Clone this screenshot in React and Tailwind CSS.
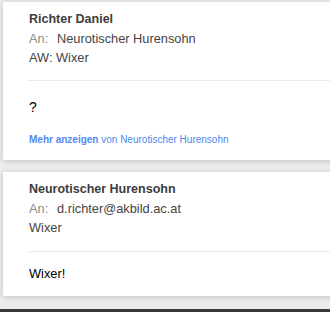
import React from "react";

const font = { fontFamily: '"Liberation Sans", Arial, sans-serif' };

const Header = ({ from, to, subject }) => (
  <div className="pl-[26px] pt-[8px]">
    <div className="h-[19px] leading-[19px] text-[12.5px] font-bold text-[#3c3c3c]">{from}</div>
    <div className="h-[19px] leading-[19px] text-[12.8px] flex">
      <span className="text-[#8a8a8a] w-[28px]">An:</span>
      <span className="text-[#444]">{to}</span>
    </div>
    <div className="h-[19px] leading-[19px] text-[12.8px] text-[#444]">{subject}</div>
  </div>
);

const App = () => {
  return (
    <div style={font} className="h-[312px] w-[330px] overflow-hidden bg-[#ececec] flex flex-col">
      <div className="pl-[3px] pt-[2px] flex flex-col gap-[12px]">
        <div className="w-[340px] h-[158px] bg-white shadow-[0_1px_6px_rgba(0,0,0,0.18)]">
          <Header from="Richter Daniel" to="Neurotischer Hurensohn" subject="AW: Wixer" />
          <div className="ml-[25px] mt-[13px] h-px bg-[#ebebeb]" />
          <div className="pl-[26px] mt-[17px] h-[19px] leading-[19px] text-[14px] text-black">?</div>
          <div className="pl-[26px] mt-[16px] h-[14px] leading-[14px] text-[10px] text-[#5089f2]">
            <span className="font-bold">Mehr anzeigen</span> von Neurotischer Hurensohn
          </div>
        </div>
        <div className="w-[340px] h-[124px] bg-white shadow-[0_1px_6px_rgba(0,0,0,0.18)]">
          <Header from="Neurotischer Hurensohn" to="d.richter@akbild.ac.at" subject="Wixer" />
          <div className="ml-[25px] mt-[14px] h-px bg-[#ebebeb]" />
          <div className="pl-[26px] mt-[12px] h-[19px] leading-[19px] text-[12.8px] text-black">Wixer!</div>
        </div>
      </div>
      <div className="mt-auto h-[3px] bg-[#3a3a3a]" />
    </div>
  );
};

export default App;
